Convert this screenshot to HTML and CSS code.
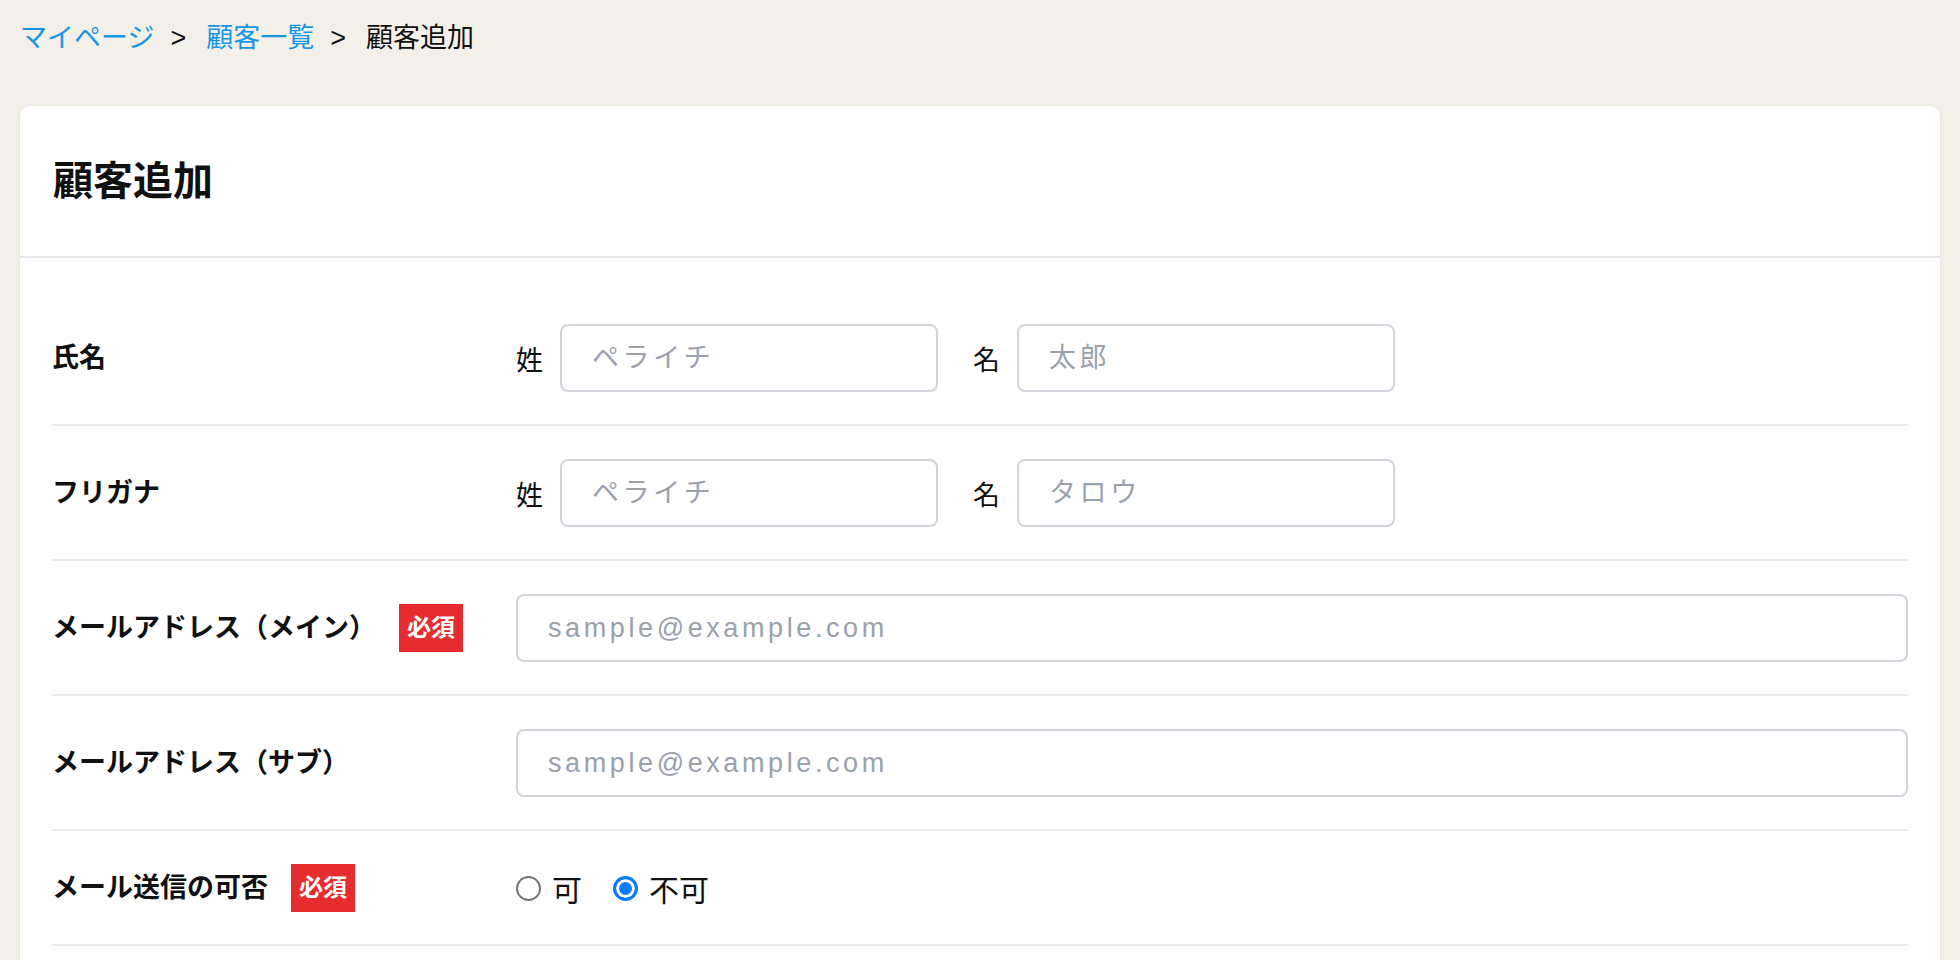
FILE: index.html
```html
<!DOCTYPE html>
<html lang="ja">
<head>
    <meta charset="UTF-8">
    <meta name="viewport" content="width=device-width, initial-scale=1.0">
    <title>顧客追加</title>
    <link rel="stylesheet" href="styles.css">
</head>
<body>

    <nav class="breadcrumb">
        <a href="#">マイページ</a><span class="sep">&gt;</span><a href="#">顧客一覧</a><span class="sep">&gt;</span><span class="current">顧客追加</span>
    </nav>

    <section class="card">
        <header class="card-header">
            <h1>顧客追加</h1>
        </header>

        <form class="card-body" onsubmit="event.preventDefault();">
            <div class="form-row">
                <div class="form-label">氏名</div>
                <div class="form-field">
                    <span class="sub-label">姓</span>
                    <input type="text" class="input input-name" placeholder="ペライチ">
                    <span class="sub-label">名</span>
                    <input type="text" class="input input-name" placeholder="太郎">
                </div>
            </div>

            <div class="form-row">
                <div class="form-label">フリガナ</div>
                <div class="form-field">
                    <span class="sub-label">姓</span>
                    <input type="text" class="input input-name" placeholder="ペライチ">
                    <span class="sub-label">名</span>
                    <input type="text" class="input input-name" placeholder="タロウ">
                </div>
            </div>

            <div class="form-row">
                <div class="form-label">メールアドレス（メイン）<span class="badge">必須</span></div>
                <div class="form-field">
                    <input type="email" class="input input-wide" placeholder="sample@example.com">
                </div>
            </div>

            <div class="form-row">
                <div class="form-label">メールアドレス（サブ）</div>
                <div class="form-field">
                    <input type="email" class="input input-wide" placeholder="sample@example.com">
                </div>
            </div>

            <div class="form-row">
                <div class="form-label">メール送信の可否<span class="badge">必須</span></div>
                <div class="form-field">
                    <label class="radio"><input type="radio" name="mail_ok" value="1">可</label>
                    <label class="radio"><input type="radio" name="mail_ok" value="0" checked>不可</label>
                </div>
            </div>
        </form>
    </section>

</body>
</html>
```

FILE: styles.css
```css
body {
    margin: 0;
    padding: 18px 20px;
    background-color: #f3f0e9;
    font-family: "Liberation Sans", "Noto Sans CJK JP", sans-serif;
    color: #111;
}

/* breadcrumb */
.breadcrumb {
    font-size: 27px;
    line-height: 40px;
    margin-bottom: 48px;
}
.breadcrumb a {
    color: #1796e3;
    text-decoration: none;
}
.breadcrumb .sep {
    margin: 0 20px 0 16px;
}

/* card */
.card {
    background-color: #fff;
    border-radius: 10px;
    box-shadow: 0 1px 4px rgba(0, 0, 0, 0.08);
}
.card-header {
    padding: 45px 33px;
    border-bottom: 2px solid #e4e8ec;
}
.card-header h1 {
    margin: 0;
    font-size: 40px;
    line-height: 60px;
    font-weight: 700;
}
.card-body {
    padding: 33px 32px 32px;
}

/* rows */
.form-row {
    display: flex;
    align-items: center;
    padding: 33px 0 32px;
    border-bottom: 2px solid #e7eaee;
}
.form-label {
    width: 25%;
    flex: none;
    display: flex;
    align-items: center;
    gap: 23px;
    font-size: 27px;
    line-height: 40px;
    font-weight: 700;
}
.badge {
    background-color: #e52d2f;
    color: #fff;
    font-size: 24px;
    line-height: 48px;
    padding: 0 8px;
    font-weight: 700;
}
.form-field {
    flex: 1;
    display: flex;
    align-items: center;
}
.sub-label {
    font-size: 27px;
    margin-right: 17px;
}

/* inputs */
.input {
    height: 68px;
    box-sizing: border-box;
    border: 2px solid #d1d5db;
    border-radius: 8px;
    padding: 0 30px;
    font-family: inherit;
    font-size: 27px;
    letter-spacing: 3.6px;
    color: #111;
    outline: none;
}
.input::placeholder {
    color: #9aa1ab;
}
.input-name {
    width: 378px;
    margin-right: 35px;
}
.input-wide {
    flex: 1;
}

/* radios */
.radio {
    display: flex;
    align-items: center;
    gap: 11px;
    font-size: 30px;
    margin-right: 31px;
}
.radio input {
    appearance: none;
    width: 25px;
    height: 25px;
    margin: 0;
    border: 2px solid #767676;
    border-radius: 50%;
    background-color: #fff;
}
.radio input:checked {
    border: 3px solid #0a7aff;
    background-color: #0a7aff;
    box-shadow: inset 0 0 0 3px #fff;
}
```
